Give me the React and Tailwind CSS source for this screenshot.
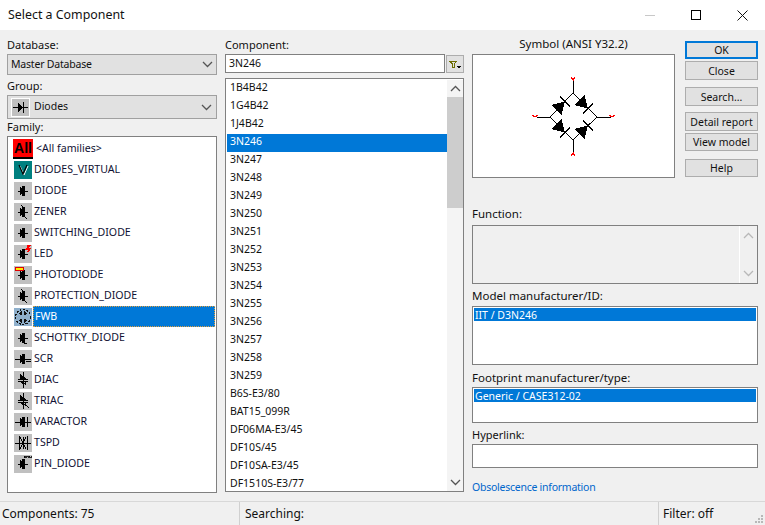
import React from 'react';

const font = { fontFamily: '"Noto Sans", sans-serif' };

const components = ['1B4B42', '1G4B42', '1J4B42', '3N246', '3N247', '3N248', '3N249', '3N250', '3N251', '3N252', '3N253', '3N254', '3N255', '3N256', '3N257', '3N258', '3N259', 'B6S-E3/80', 'BAT15_099R', 'DF06MA-E3/45', 'DF10S/45', 'DF10SA-E3/45', 'DF1510S-E3/77'];

const families = [
  ['all', '<All families>'],
  ['virtual', 'DIODES_VIRTUAL'],
  ['diode', 'DIODE'],
  ['zener', 'ZENER'],
  ['diode', 'SWITCHING_DIODE'],
  ['led', 'LED'],
  ['photo', 'PHOTODIODE'],
  ['zener', 'PROTECTION_DIODE'],
  ['fwb', 'FWB'],
  ['schottky', 'SCHOTTKY_DIODE'],
  ['scr', 'SCR'],
  ['diac', 'DIAC'],
  ['triac', 'TRIAC'],
  ['varactor', 'VARACTOR'],
  ['tspd', 'TSPD'],
  ['pin', 'PIN_DIODE'],
];

const Chevron = ({ up, color = '#555' }) => (
  <svg width="11" height="7" viewBox="0 0 11 7" fill="none" stroke={color} strokeWidth="1.3">
    <path d={up ? 'M1 6 L5.5 1.5 L10 6' : 'M1 1 L5.5 5.5 L10 1'} />
  </svg>
);

const FamilyIcon = ({ kind, selected }) => {
  if (kind === 'all') {
    return (
      <div className="w-5 h-[20px] bg-[#ff0000] border-b-2 border-black flex items-center justify-center text-[14px] font-bold text-black leading-none" style={{ fontFamily: '"Liberation Sans", sans-serif' }}>
        All
      </div>
    );
  }
  if (kind === 'virtual') {
    return (
      <div className="w-[18px] h-[18px] bg-[#008080] flex items-center justify-center">
        <svg width="12" height="12" viewBox="0 0 12 12" fill="none">
          <path d="M3 2 L7 11 L11 2" stroke="#fff" strokeWidth="1" />
          <path d="M2 1 L6 10 L10 1" stroke="#000" strokeWidth="1.2" />
        </svg>
      </div>
    );
  }
  const bg = selected ? 'bg-[#8fb0cc]' : 'bg-[#c0c0c0]';
  let art = null;
  if (kind === 'diac' || kind === 'triac') {
    art = (
      <>
        <path d="M9 1 V17 M4 8 H14 M4 10 H14" fill="none" stroke="#000" />
        <path d="M6 3 V8 H11 Z M12 15 V10 H7 Z M6 8 L12 8 L9 4 Z M6 10 L12 10 L9 14 Z" fill="#000" />
        {kind === 'triac' && <path d="M11 12 L15 16" fill="none" stroke="#000" strokeWidth="1.3" />}
      </>
    );
  } else if (kind === 'tspd') {
    art = (
      <path d="M1 9 H17 M5 2 V16 M13 2 V16 M6 3 L12 15 M6 15 L12 3 M9 3 V15" fill="none" stroke="#000" />
    );
  } else if (kind === 'fwb') {
    art = (
      <>
        <circle cx="9" cy="9" r="7.5" fill="none" stroke="#111" strokeWidth="1.3" strokeDasharray="2 1.5" />
        <path d="M4 6 L8 3 L8 7 Z M10 3 L14 6 L10 7 Z M4 12 L8 11 L8 15 Z M10 11 L14 12 L10 15 Z" fill="#111" />
      </>
    );
  } else {
    let extra = null;
    if (kind === 'zener') extra = <path d="M7 2 L10 5 V13 L13 16" fill="none" stroke="#000" />;
    if (kind === 'schottky') extra = <path d="M8 4 H10 V14 H13" fill="none" stroke="#000" />;
    if (kind === 'led') extra = <path d="M13 1 H16 L13 4 H16 L14 7" fill="none" stroke="#ff0000" strokeWidth="1.4" />;
    if (kind === 'photo') extra = <path d="M1 1 H9 V4 H1 Z" fill="#ffee00" stroke="#e00000" strokeWidth="1" />;
    if (kind === 'scr') extra = <path d="M1 9 H17 M12 11 H17" fill="none" stroke="#000" />;
    if (kind === 'varactor') extra = <path d="M13 4 V14 M1 9 H17" fill="none" stroke="#000" />;
    if (kind === 'pin') extra = <path d="M10 3 V1 H13 V2 H10 M14 3 V1 M15 3 V1 L17 3 V1" fill="none" stroke="#000" strokeWidth="0.8" />;
    art = (
      <>
        <path d="M4 9 H14 M8 4 V14" fill="none" stroke="#000" />
        <path d="M6 5 V13 L10 9 Z" fill="#000" />
        <path d="M10 4 V14" fill="none" stroke="#000" strokeWidth="2" />
        {extra}
      </>
    );
  }
  return (
    <div className={`w-[18px] h-[18px] ${bg}`}>
      <svg width="18" height="18" viewBox="0 0 18 18" shapeRendering="crispEdges">{art}</svg>
    </div>
  );
};

const BridgeDiode = ({ x, y, rot }) => (
  <g transform={`translate(${x} ${y}) rotate(${rot})`}>
    <polygon points="-7,-7 -7,7 5,0" fill="#000" />
    <line x1="5" y1="-7" x2="5" y2="7" stroke="#000" strokeWidth="1.2" />
  </g>
);

const Pin = ({ d }) => <path d={d} fill="none" stroke="#ff0000" strokeWidth="1" />;

const SymbolDrawing = () => (
  <svg width="201" height="122" viewBox="0 0 201 122" fill="none" shapeRendering="crispEdges">
    <path d="M100 25 V38 L124 62 H138 M100 98 V85 L124 62 M100 38 L77 62 H64 M100 85 L77 62" stroke="#000" strokeWidth="1" />
    <BridgeDiode x={88.5} y={50} rot={-45} />
    <BridgeDiode x={111.5} y={50} rot={45} />
    <BridgeDiode x={88.5} y={74} rot={45} />
    <BridgeDiode x={111.5} y={74} rot={-45} />
    <Pin d="M98 22 L100 25 L102 22 M100 25 V26" />
    <Pin d="M98 101 L100 98 L102 101 M100 98 V97" />
    <Pin d="M59 60 L62 62 L65 60" />
    <Pin d="M136 60 L139 62 L142 60" />
  </svg>
);

const Label = ({ className = '', children }) => (
  <div className={`flex items-center text-[11.5px] text-[#111] leading-none ${className}`}>{children}</div>
);

const Btn = ({ className = '', children }) => (
  <button className={`w-[73px] flex items-center justify-center bg-[#e1e1e1] text-[10.5px] text-[#111] leading-none ${className}`}>
    {children}
  </button>
);

const SelectedBox = ({ text, className }) => (
  <div className={`border border-[#808080] bg-white p-px ${className}`}>
    <div className="h-[13px] bg-[#0078d7] text-white text-[10.5px] leading-[14px] pl-px">{text}</div>
  </div>
);

export default function App() {
  return (
    <div className="w-[765px] h-[525px] bg-[#f0f0f0] flex flex-col overflow-hidden" style={font}>
      {/* Title bar */}
      <div className="h-[30px] bg-white flex items-center justify-between">
        <span className="pl-2 text-[12.4px] text-[#111]">Select a Component</span>
        <div className="flex items-center">
          <div className="w-[46px] flex justify-center"><div className="w-[10px] h-px bg-[#c8c8c8]" /></div>
          <div className="w-[46px] flex justify-center"><div className="w-[10px] h-[10px] border border-black" /></div>
          <div className="w-[46px] flex justify-center">
            <svg width="11" height="11" viewBox="0 0 11 11" stroke="#111" strokeWidth="1"><path d="M0.5 0.5 L10.5 10.5 M10.5 0.5 L0.5 10.5" /></svg>
          </div>
        </div>
      </div>

      {/* Main */}
      <div className="flex-1 flex pt-2 pl-[7px] gap-2">
        {/* Left column */}
        <div className="w-[210px] flex flex-col">
          <Label className="h-4 pb-1 text-[11px]">Database:</Label>
          <div className="h-[21px] flex items-center justify-between bg-[#e1e1e1] border border-[#a0a0a0] pl-[3px] pr-[3px] text-[10.5px] tracking-[-0.2px] text-[#111]">
            <span>Master Database</span>
            <Chevron />
          </div>
          <Label className="h-5 text-[11px]">Group:</Label>
          <div className="h-6 flex items-center justify-between bg-[#e1e1e1] border border-[#a0a0a0] pl-[3px] pr-1 text-[10.5px] text-[#111]">
            <div className="flex items-center gap-[4px]">
              <div className="w-[19px] h-[19px] bg-[#c0c0c0] border border-white">
                <svg width="17" height="17" viewBox="0 0 17 17" shapeRendering="crispEdges"><path d="M1 8.5 H16 M11 3 V14" fill="none" stroke="#000" /><path d="M6 4 V13 L11 8.5 Z" fill="#000" /></svg>
              </div>
              <span>Diodes</span>
            </div>
            <Chevron />
          </div>
          <Label className="h-[17px] pb-[3px] text-[11px]">Family:</Label>
          <div className="h-[357px] border border-[#808080] bg-white pt-px pl-[5px] pr-px">
            {families.map(([kind, name]) => {
              const selected = name === 'FWB';
              return (
                <div key={name} className="h-[21px] flex items-center">
                  <div className="w-5 flex justify-center shrink-0"><FamilyIcon kind={kind} selected={selected} /></div>
                  <div className={`flex-1 h-[21px] flex items-center text-[10.6px] ${kind === 'all' ? 'pl-[3px]' : 'pl-px'} ${selected ? 'bg-[#0078d7] text-white border border-dotted border-[#e0a040]' : 'text-[#111133]'}`}>
                    {name}
                  </div>
                </div>
              );
            })}
          </div>
        </div>

        {/* Middle column */}
        <div className="w-[239px] flex flex-col">
          <Label className="h-4 pb-1 text-[11px]">Component:</Label>
          <div className="flex gap-px">
            <div className="w-[220px] h-[19px] border border-[#808080] bg-white flex items-center pl-[3px] text-[10.5px] text-[#111]">3N246</div>
            <div className="w-[18px] h-[18px] mt-px bg-[#e1e1e1] border border-[#adadad] flex items-center justify-center">
              <svg width="14" height="12" viewBox="0 0 14 12" shapeRendering="crispEdges"><path d="M1 3 H9 L6 6 V9 H4.5 V6 Z" fill="none" stroke="#6b6b00" strokeWidth="1" /><path d="M9 8 H13 L11 10.5 Z" fill="#111" /></svg>
            </div>
          </div>
          <div className="h-[414px] mt-[5px] border border-[#808080] bg-white pt-px pl-px flex overflow-hidden">
            <div className="w-[220px]">
              {components.map((name) => (
                <div key={name} className={`h-[18px] flex items-center pl-[3px] pb-[3px] text-[10.5px] ${name === '3N246' ? 'bg-[#0078d7] text-white' : 'text-[#111]'}`}>
                  {name}
                </div>
              ))}
            </div>
            <div className="w-4 flex flex-col items-center bg-[#f4f4f4]">
              <div className="h-[17px] flex items-center justify-center"><Chevron up /></div>
              <div className="w-full h-[111px] bg-[#cdcdcd]" />
              <div className="flex-1" />
              <div className="h-[17px] flex items-center justify-center"><Chevron /></div>
            </div>
          </div>
        </div>

        {/* Right column */}
        <div className="w-[286px] flex flex-col">
          <div className="flex gap-[10px]">
            <div className="w-[203px] flex flex-col">
              <Label className="h-4 pb-1 justify-center text-[10.6px]">Symbol (ANSI Y32.2)</Label>
              <div className="h-[124px] border border-[#808080] bg-white">
                <SymbolDrawing />
              </div>
            </div>
            <div className="w-[73px] flex flex-col mt-[3px]">
              <Btn className="h-[18px] border-2 border-[#0078d7]">OK</Btn>
              <Btn className="h-[19px] mt-[2px] pt-[2px] border border-[#adadad]">Close</Btn>
              <Btn className="h-[19px] mt-[7px] pt-[2px] border border-[#adadad]">Search...</Btn>
              <Btn className="h-[19px] mt-[6px] pt-[2px] border border-[#adadad]">Detail report</Btn>
              <Btn className="h-[18px] mt-[2px] pt-px border border-[#adadad]">View model</Btn>
              <Btn className="h-[18px] mt-2 border border-[#adadad]">Help</Btn>
            </div>
          </div>

          <Label className="h-[18px] mt-[29px] pb-[5px]">Function:</Label>
          <div className="h-[59px] border border-[#808080] bg-[#f0f0f0] flex justify-end">
            <div className="w-[18px] border-l border-white flex flex-col items-center justify-between py-[6px]">
              <Chevron up color="#b8b8b8" />
              <Chevron color="#b8b8b8" />
            </div>
          </div>
          <Label className="h-[22px] pt-px text-[10.2px]">Model manufacturer/ID:</Label>
          <SelectedBox text="IIT / D3N246" className="h-[59px]" />
          <Label className="h-[22px] pt-[3px]">Footprint manufacturer/type:</Label>
          <SelectedBox text="Generic / CASE312-02" className="h-9" />
          <Label className="h-[21px] pt-px text-[11px]">Hyperlink:</Label>
          <div className="h-6 border border-[#808080] bg-white" />
          <div className="mt-[12px] text-[10.5px] tracking-[-0.25px] leading-[14px] text-[#0066cc]">Obsolescence information</div>
        </div>
      </div>

      {/* Status bar */}
      <div className="h-6 border-t border-[#d8d8d8] flex items-center text-[12px] text-[#111]">
        <div className="w-[240px] h-full flex items-center pl-[2px] border-r border-[#d0d0d0]">Components: 75</div>
        <div className="w-[419px] h-full flex items-center pl-[5px] border-r border-[#d0d0d0]">Searching:</div>
        <div className="flex-1 h-full flex items-center justify-between pl-1">
          <span>Filter: off</span>
          <svg className="self-end mb-px mr-px" width="11" height="11" viewBox="0 0 11 11" fill="#b8b8b8" shapeRendering="crispEdges">
            <rect x="8" y="2" width="2" height="2" />
            <rect x="5" y="5" width="2" height="2" />
            <rect x="8" y="5" width="2" height="2" />
            <rect x="2" y="8" width="2" height="2" />
            <rect x="5" y="8" width="2" height="2" />
            <rect x="8" y="8" width="2" height="2" />
          </svg>
        </div>
      </div>
    </div>
  );
}
